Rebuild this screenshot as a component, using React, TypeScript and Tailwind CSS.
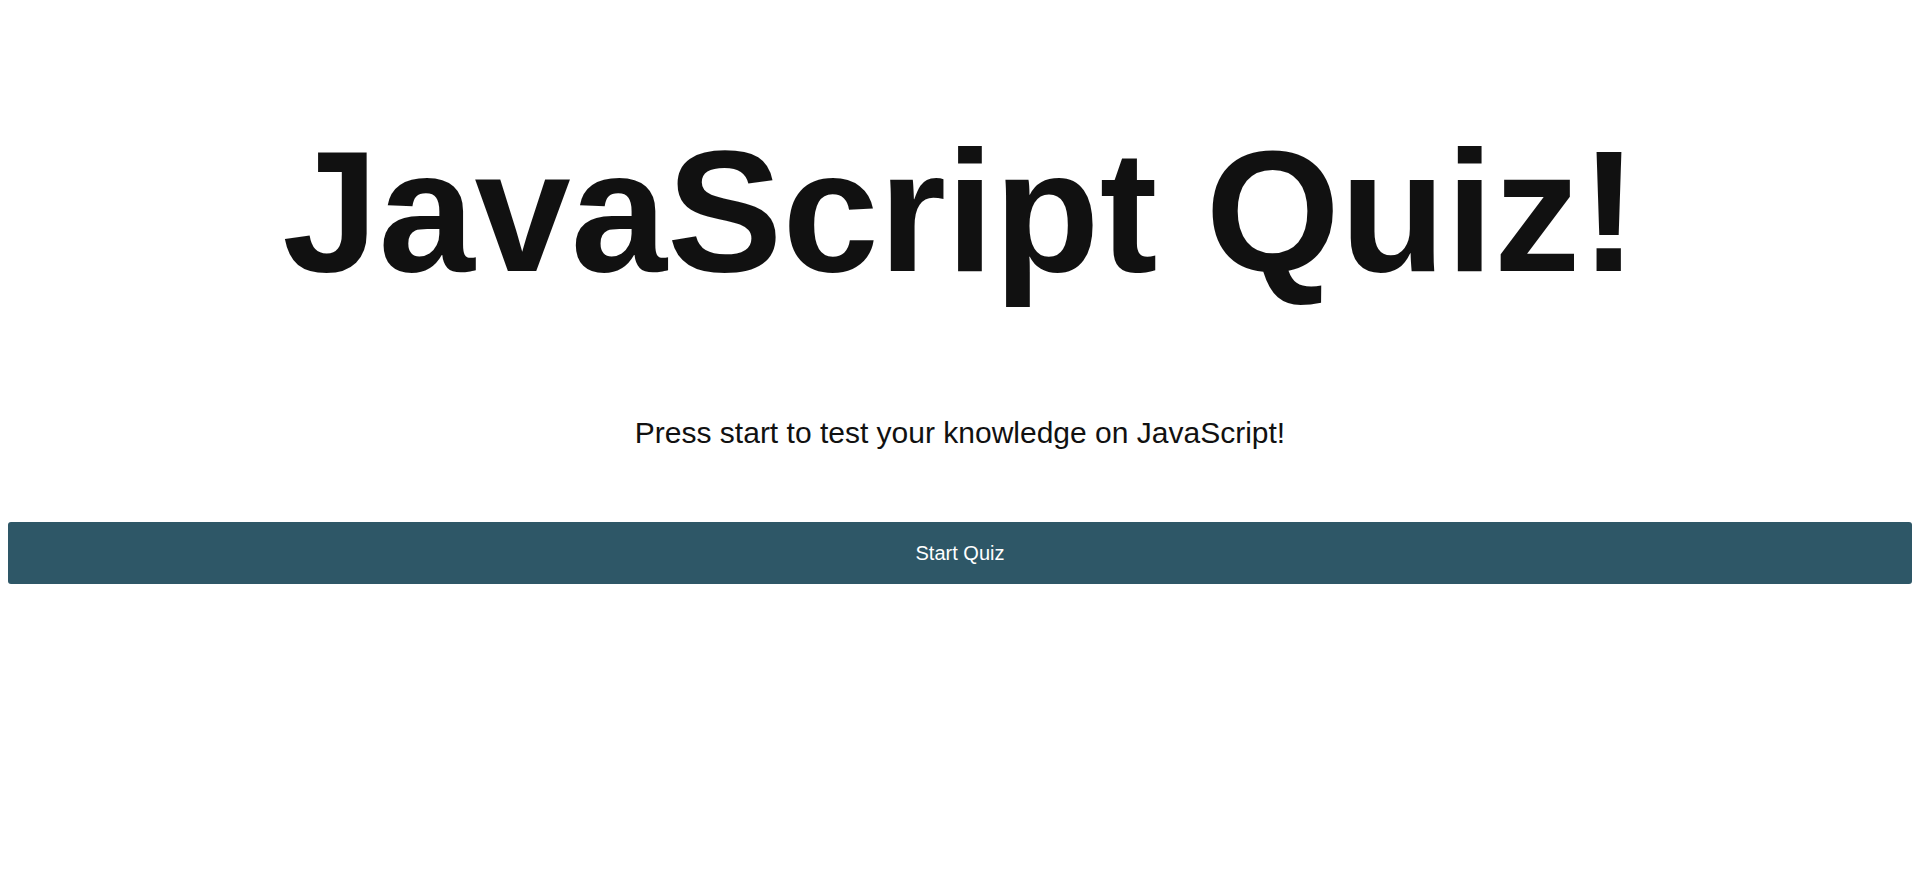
export default function App() {
  return (
    <div className="min-h-screen bg-white px-2 font-['Liberation_Sans',Arial,sans-serif] text-[#111111]">
      <div className="flex flex-col items-center pt-[125px]">
        <h1 className="text-[173px] font-bold leading-none">JavaScript Quiz!</h1>
        <p className="mt-[120px] text-[30px] leading-none">Press start to test your knowledge on JavaScript!</p>
      </div>
      <button className="mt-[74px] flex h-[62px] w-full items-center justify-center rounded-[3px] bg-[#2e5767] text-[20px] text-white">
        Start Quiz
      </button>
    </div>
  );
}
